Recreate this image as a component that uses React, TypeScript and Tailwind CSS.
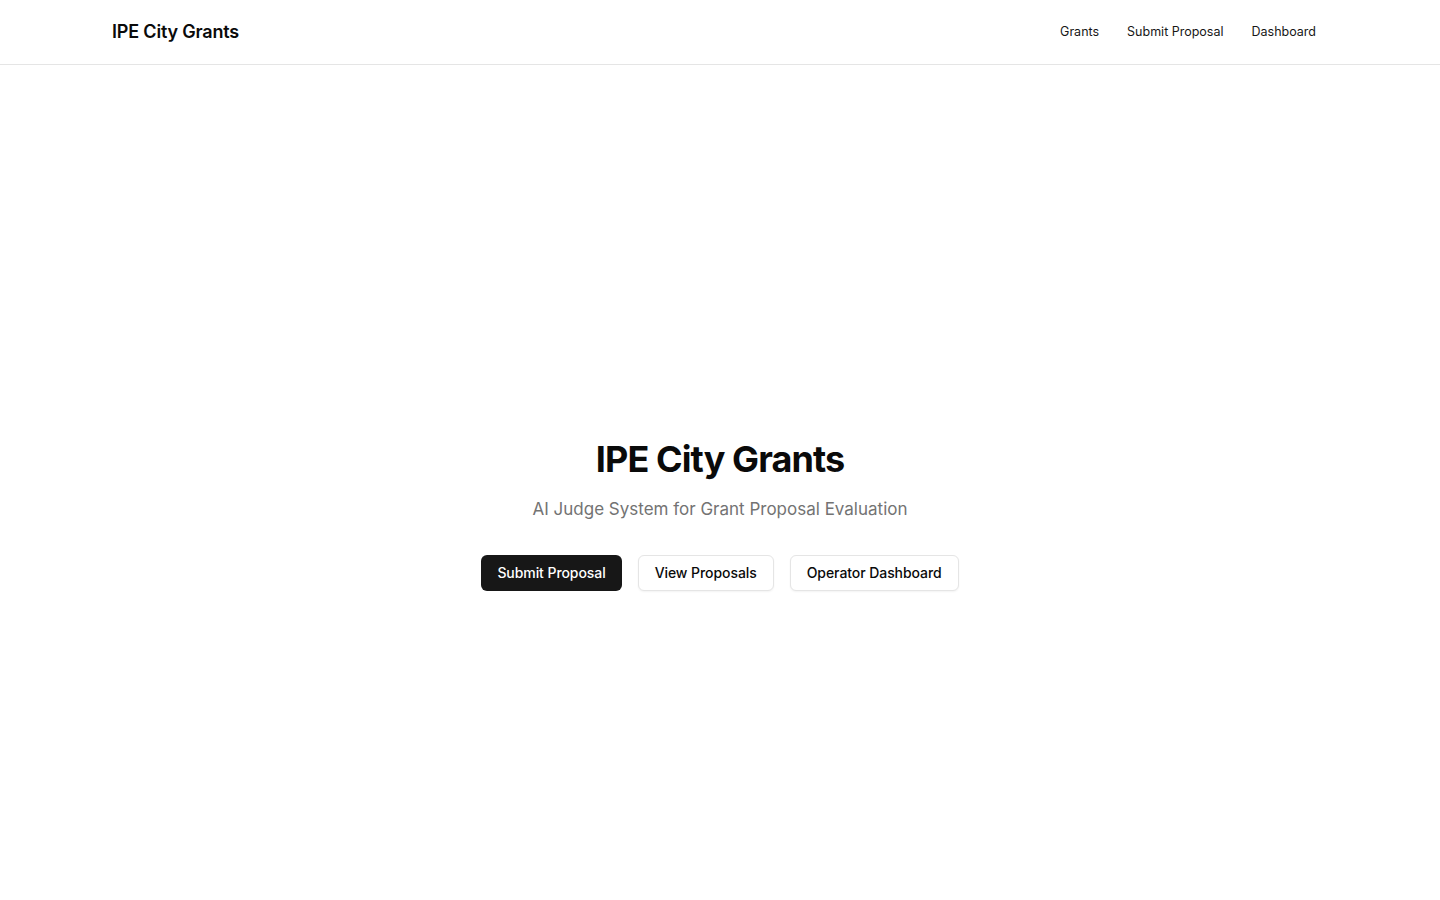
import React from "react";

export default function App() {
  return (
    <div className="bg-white text-neutral-950" style={{ fontFamily: "Inter, 'Noto Sans', sans-serif" }}>
      <header className="border-b border-neutral-200">
        <div className="mx-auto max-w-7xl px-8 h-16 flex items-center justify-between">
          <span className="text-lg font-semibold tracking-[-0.01em] text-neutral-950">IPE City Grants</span>
          <nav className="flex items-center gap-1 text-[12.5px] font-normal text-neutral-900">
            <a className="px-3 py-2">Grants</a>
            <a className="px-3 py-2">Submit Proposal</a>
            <a className="px-3 py-2">Dashboard</a>
          </nav>
        </div>
      </header>
      <main className="min-h-screen flex items-center justify-center">
        <div className="flex flex-col items-center text-center">
          <h1 className="text-4xl font-bold tracking-tight text-neutral-950">IPE City Grants</h1>
          <p className="mt-4 text-[17px] leading-7 text-neutral-500">AI Judge System for Grant Proposal Evaluation</p>
          <div className="mt-8 flex items-center gap-4">
            <button className="h-9 px-4 rounded-md bg-neutral-900 text-white text-sm font-medium tracking-[-0.005em]">Submit Proposal</button>
            <button className="h-9 px-4 rounded-md border border-neutral-200 bg-white shadow-xs text-sm font-medium tracking-[-0.005em] text-neutral-950">View Proposals</button>
            <button className="h-9 px-4 rounded-md border border-neutral-200 bg-white shadow-xs text-sm font-medium tracking-[-0.005em] text-neutral-950">Operator Dashboard</button>
          </div>
        </div>
      </main>
    </div>
  );
}
